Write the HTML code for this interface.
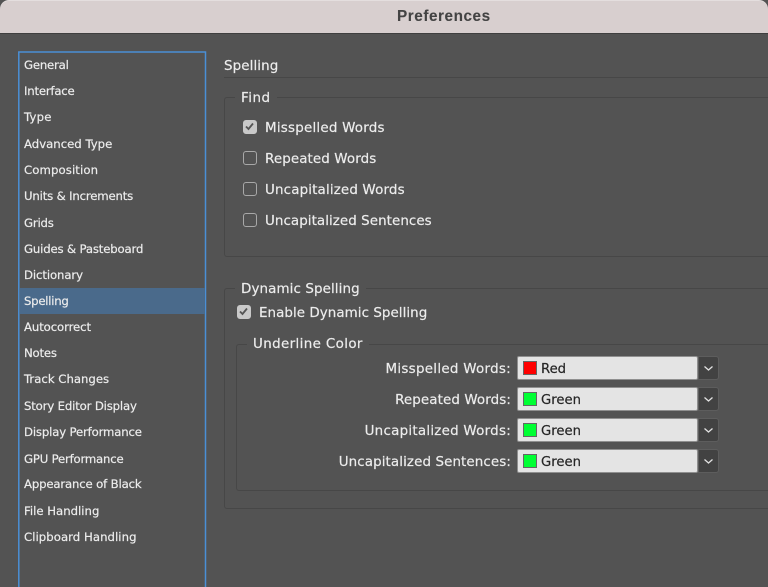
<!DOCTYPE html>
<html><head><meta charset="utf-8"><style>
html,body{margin:0;padding:0;width:768px;height:587px;overflow:hidden;background:#535353}
#p{position:relative;width:768px;height:587px;background:#535353;overflow:hidden;font-family:"DejaVu Sans","Liberation Sans",sans-serif;color:#ececec;filter:blur(.35px)}
#p div,#p span{position:absolute;box-sizing:border-box}
.t{white-space:nowrap;line-height:16px;height:16px;-webkit-text-stroke:.2px currentColor}
.n{font-size:11.7px;left:24px}
.f{font-size:13.45px;letter-spacing:.1px;margin-top:2px}
.g{border:1px solid #474747;border-right:0;border-radius:3px 0 0 3px}
.c{width:14px;height:14px;border:1.5px solid #a8a8a8;border-radius:3px}
.k{background:#c9c9c9;border-color:#c9c9c9}
.k svg,.a svg{position:absolute}
.l{font-size:13.45px;text-align:right;left:250px;width:261px;letter-spacing:.1px;margin-top:2px}
.s{left:517px;width:181px;height:24px;background:#e4e4e4;border:1.5px solid #8f8f8f;border-radius:2px}
.w{left:523px;width:14px;height:14px;border:1px solid #666}
.v{left:541px;font-size:13.2px;color:#262626;margin-top:2px}
.a{left:698px;width:21px;height:24px;background:#424242;border:1px solid #5d5d5d;border-radius:0 3px 3px 0}
</style></head><body><div id="p">
<div style="left:0;top:0;width:768px;height:34px;background:#d8cfcf;border-top:1px solid #e4dede;border-bottom:1px solid #3f3f3f;border-radius:9px 9px 0 0"></div>
<div class="t" style="left:397px;top:9px;font-size:15.3px;font-weight:bold;color:#434343;font-family:'Liberation Sans',sans-serif;letter-spacing:.55px;-webkit-text-stroke:.1px currentColor">Preferences</div>

<svg width="768" height="587" style="position:absolute;left:0;top:0"><path d="M18.8 587V52H205.5V587" fill="none" stroke="#4a8fd6" stroke-width="1.5"/></svg>
<div style="left:20px;top:288px;width:185px;height:26px;background:#4a6a8b"></div>
<div class="t n" style="top:57px;letter-spacing:-.2px">General</div>
<div class="t n" style="top:83px;letter-spacing:-.2px">Interface</div>
<div class="t n" style="top:109px;letter-spacing:.2px">Type</div>
<div class="t n" style="top:136px">Advanced Type</div>
<div class="t n" style="top:162px;letter-spacing:.1px">Composition</div>
<div class="t n" style="top:188px;letter-spacing:-.17px">Units &amp; Increments</div>
<div class="t n" style="top:215px;letter-spacing:-.2px">Grids</div>
<div class="t n" style="top:241px;letter-spacing:-.16px">Guides &amp; Pasteboard</div>
<div class="t n" style="top:267px;letter-spacing:-.1px">Dictionary</div>
<div class="t n" style="top:293px;letter-spacing:-.25px">Spelling</div>
<div class="t n" style="top:319px;letter-spacing:-.1px">Autocorrect</div>
<div class="t n" style="top:345px;letter-spacing:-.2px">Notes</div>
<div class="t n" style="top:371px">Track Changes</div>
<div class="t n" style="top:398px;letter-spacing:-.16px">Story Editor Display</div>
<div class="t n" style="top:424px;letter-spacing:-.16px">Display Performance</div>
<div class="t n" style="top:451px;letter-spacing:-.2px">GPU Performance</div>
<div class="t n" style="top:476px;letter-spacing:-.16px">Appearance of Black</div>
<div class="t n" style="top:503px">File Handling</div>
<div class="t n" style="top:529px;letter-spacing:.05px">Clipboard Handling</div>

<div class="t f" style="left:224px;top:57px">Spelling</div>
<div style="left:224px;top:77px;width:544px;height:1px;background:#474747"></div>

<div class="g" style="left:224px;top:97px;width:544px;height:160px"></div>
<div class="t f" style="left:235px;top:89px;padding:0 6px;background:#535353;height:15px;letter-spacing:.5px">Find</div>
<div class="c k" style="left:243px;top:120px"><svg width="11" height="11" viewBox="0 0 11 11" style="left:0;top:0"><path d="M2 5.5l2.5 2.5L9 2.5" fill="none" stroke="#555" stroke-width="1.8"/></svg></div>
<div class="t f" style="left:265px;top:119px;letter-spacing:.22px">Misspelled Words</div>
<div class="c" style="left:243px;top:151px"></div>
<div class="t f" style="left:265px;top:150px">Repeated Words</div>
<div class="c" style="left:243px;top:182px"></div>
<div class="t f" style="left:265px;top:181px;letter-spacing:.15px">Uncapitalized Words</div>
<div class="c" style="left:243px;top:213px"></div>
<div class="t f" style="left:265px;top:212px;letter-spacing:.06px">Uncapitalized Sentences</div>

<div class="g" style="left:224px;top:288px;width:544px;height:221px"></div>
<div class="t f" style="left:235px;top:280px;padding:0 6px;background:#535353;height:15px">Dynamic Spelling</div>
<div class="c k" style="left:237px;top:305px"><svg width="11" height="11" viewBox="0 0 11 11" style="left:0;top:0"><path d="M2 5.5l2.5 2.5L9 2.5" fill="none" stroke="#555" stroke-width="1.8"/></svg></div>
<div class="t f" style="left:259px;top:304px;letter-spacing:.05px">Enable Dynamic Spelling</div>

<div class="g" style="left:236px;top:344px;width:532px;height:147px"></div>
<div class="t f" style="left:247px;top:335px;padding:0 6px;background:#535353;height:15px;letter-spacing:.37px">Underline Color</div>

<div class="t l" style="top:360px;letter-spacing:.28px">Misspelled Words:</div>
<div class="s" style="top:356px"></div><div class="w" style="top:361px;background:#f00"></div><div class="t v" style="top:360px">Red</div>
<div class="a" style="top:356px"><svg width="19" height="22" style="left:0;top:0"><path d="M5.5 9.5l4 3.5 4-3.5" fill="none" stroke="#e2e2e2" stroke-width="1.3"/></svg></div>

<div class="t l" style="top:391px">Repeated Words:</div>
<div class="s" style="top:387px"></div><div class="w" style="top:392px;background:#0f3"></div><div class="t v" style="top:391px">Green</div>
<div class="a" style="top:387px"><svg width="19" height="22" style="left:0;top:0"><path d="M5.5 9.5l4 3.5 4-3.5" fill="none" stroke="#e2e2e2" stroke-width="1.3"/></svg></div>

<div class="t l" style="top:422px;letter-spacing:.25px">Uncapitalized Words:</div>
<div class="s" style="top:418px"></div><div class="w" style="top:423px;background:#0f3"></div><div class="t v" style="top:422px">Green</div>
<div class="a" style="top:418px"><svg width="19" height="22" style="left:0;top:0"><path d="M5.5 9.5l4 3.5 4-3.5" fill="none" stroke="#e2e2e2" stroke-width="1.3"/></svg></div>

<div class="t l" style="top:453px">Uncapitalized Sentences:</div>
<div class="s" style="top:449px"></div><div class="w" style="top:454px;background:#0f3"></div><div class="t v" style="top:453px">Green</div>
<div class="a" style="top:449px"><svg width="19" height="22" style="left:0;top:0"><path d="M5.5 9.5l4 3.5 4-3.5" fill="none" stroke="#e2e2e2" stroke-width="1.3"/></svg></div>
</div></body></html>
